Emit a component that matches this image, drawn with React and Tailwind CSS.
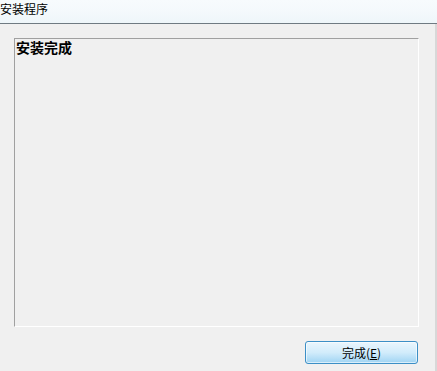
export default function App() {
  const cjk = { fontFamily: '"Noto Sans CJK SC", "Noto Sans", sans-serif' };
  return (
    <div className="w-[437px] h-[371px] overflow-hidden bg-[#f0f0f0] flex flex-col" style={cjk}>
      <div className="h-[24px] shrink-0 bg-gradient-to-b from-[#f7fbfd] via-[#f4f9fc] to-[#eef6fa] border-b border-[#6f7a82] text-[12px] leading-[18px] text-black pl-0 pt-[0px]">
        安装程序
      </div>
      <div className="flex-1 flex border-r-[2px] border-[#d8d8d8]">
        <div className="flex-1 flex flex-col pl-[14px] pr-[16px] pt-[14px]">
          <div className="h-[289px] border-t border-l border-[#a0a0a0] border-b border-r border-b-white border-r-white bg-[#f0f0f0] pl-[1px] pt-[0px]">
            <div className="text-[14px] leading-[17px] font-bold text-black">安装完成</div>
          </div>
          <div className="flex justify-end pt-[14px] pr-[1px]">
            <button className="w-[113px] h-[23px] rounded-[3px] border border-[#3c8fc6] bg-gradient-to-b from-[#eaf6fd] via-[#d2ecfb] to-[#9fd4f3] shadow-[inset_0_0_0_1px_rgba(255,255,255,0.6)] text-[12px] leading-[19px] text-black">
              完成(<span className="underline">E</span>)
            </button>
          </div>
        </div>
      </div>
    </div>
  );
}
